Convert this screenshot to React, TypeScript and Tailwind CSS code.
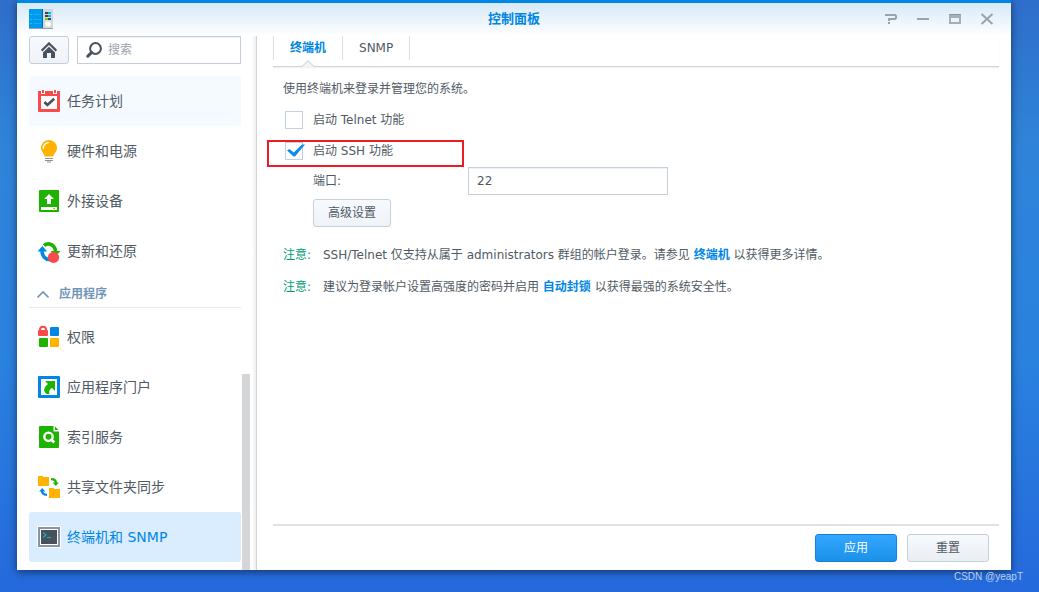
import React, { useState } from 'react';

type IconProps = { className?: string };

const AppIcon: React.FC<IconProps> = ({ className }) => (
  <svg className={className} viewBox="0 0 24 20" aria-hidden="true">
    <rect x="0" y="0" width="13" height="19" fill="#0099ee" />
    <rect x="14" y="0" width="10" height="19" fill="#d3d9df" />
    <rect x="0" y="19" width="24" height="1" fill="#9aa2aa" />
    <rect x="13" y="0" width="1" height="19" fill="#0069b8" />
    <path d="M4 5.500h8M4 10.500h8M4 14.500h8" stroke="#12b0f4" strokeWidth="1" />
    <path d="M1 5.500h2M1 10.500h2M1 14.500h2" stroke="#00d0ff" strokeWidth="1" />
    <path d="M16 4h6M16 7h6M16 10h6" stroke="#3c4650" strokeWidth="2" />
    <path d="M19 4h3M19 7h3" stroke="#00b8e6" strokeWidth="2" />
    <path d="M16 10h3" stroke="#7fd000" strokeWidth="2" />
    <circle cx="19" cy="15" r="2.800" fill="#ffffff" />
  </svg>
);

const HomeIcon: React.FC<IconProps> = ({ className }) => (
  <svg className={className} viewBox="0 0 16 16" aria-hidden="true">
    <path d="M0.600 8.600L8 1.400l7.400 7.200" fill="none" stroke="#48525d" strokeWidth="2.200" />
    <path d="M2 10.500L8 4.800l6 5.700V16h-4v-5H6v5H2z" fill="#48525d" />
  </svg>
);

const SearchIcon: React.FC<IconProps> = ({ className }) => (
  <svg className={className} viewBox="0 0 16 16" aria-hidden="true">
    <circle cx="9.500" cy="6.500" r="5.400" fill="none" stroke="#48525d" strokeWidth="2" />
    <path d="M5.400 10.600L1.800 14.200" stroke="#48525d" strokeWidth="3" strokeLinecap="round" />
  </svg>
);

const TaskIcon: React.FC<IconProps> = ({ className }) => (
  <svg className={className} viewBox="0 0 24 24" aria-hidden="true">
    <path d="M1 2h22v20q0 1-1 1H2q-1 0-1-1z" fill="#fa4b4b" />
    <rect x="4" y="7" width="16" height="13" fill="#ffffff" />
    <path d="M4 1h4v4H4zM16 1h4v4h-4z" fill="#ffffff" />
    <path d="M5 1h2v3H5zM17 1h2v3h-2z" fill="#fa4b4b" />
    <path d="M7.400 13l3 3 6.800-6.200" fill="none" stroke="#48525d" strokeWidth="2.600" />
  </svg>
);

const BulbIcon: React.FC<IconProps> = ({ className }) => (
  <svg className={className} viewBox="0 0 24 24" aria-hidden="true">
    <path d="M12 1a8 8 0 0 1 8 8c0 3.800-3 4.800-3.600 8.400H7.600C7 13.800 4 12.800 4 9a8 8 0 0 1 8-8z" fill="#ffb300" />
    <path d="M6.300 9.200A5.500 5.500 0 0 1 11.500 3.600" fill="none" stroke="#ffffff" strokeWidth="1.400" strokeLinecap="round" />
    <path d="M8 19.500h8M8 21.500h8M10 23h4" stroke="#8893a5" strokeWidth="1" />
  </svg>
);

const ExternalIcon: React.FC<IconProps> = ({ className }) => (
  <svg className={className} viewBox="0 0 24 24" aria-hidden="true">
    <rect x="2" y="1" width="20" height="22" rx="1" fill="#1eb300" />
    <path d="M12 5l5 5h-3v5h-4v-5H7z" fill="#ffffff" />
    <rect x="4" y="18" width="16" height="3" fill="#ffffff" />
    <rect x="16" y="19" width="2" height="1" fill="#ff9500" />
  </svg>
);

const UpdateIcon: React.FC<IconProps> = ({ className }) => (
  <svg className={className} viewBox="0 0 24 24" aria-hidden="true">
    <path d="M7 6.600C10 4 17 3.600 18.600 12" fill="none" stroke="#1eb300" strokeWidth="3.600" />
    <path d="M13.600 12H23.600L18.800 17z" fill="#1eb300" />
    <path d="M5.200 11C4.400 17 9 21 13 20.400" fill="none" stroke="#0086e5" strokeWidth="3.600" />
    <path d="M0.600 12.400L5.400 7l4.800 5.400z" fill="#0086e5" />
    <circle cx="16.500" cy="18.400" r="5.600" fill="#fa4b4b" />
  </svg>
);

const PermissionIcon: React.FC<IconProps> = ({ className }) => (
  <svg className={className} viewBox="0 0 24 24" aria-hidden="true">
    <path d="M3 6V4.800a3 3 0 0 1 6 0V6" fill="none" stroke="#fa4b4b" strokeWidth="2" />
    <rect x="1" y="5" width="10" height="6" rx="1" fill="#fa4b4b" />
    <rect x="13" y="2" width="9" height="9" rx="1" fill="#0086e5" />
    <rect x="2" y="13" width="9" height="9" rx="1" fill="#1eb300" />
    <rect x="13" y="13" width="9" height="9" rx="1" fill="#ffb300" />
  </svg>
);

const PortalIcon: React.FC<IconProps> = ({ className }) => (
  <svg className={className} viewBox="0 0 24 24" aria-hidden="true">
    <rect x="1" y="1" width="22" height="22" rx="1" fill="#0086e5" />
    <rect x="4" y="4" width="16" height="16" fill="#ffffff" />
    <path d="M8 6h10v10l-3-3c-2.600 1.200-3.200 3-2.600 6H9.500C5.800 16 6.800 12 11 9z" fill="#1eb300" />
  </svg>
);

const IndexIcon: React.FC<IconProps> = ({ className }) => (
  <svg className={className} viewBox="0 0 24 24" aria-hidden="true">
    <path d="M3 1h13.500v5.500H22V22q0 1-1 1H3q-1 0-1-1V2q0-1 1-1z" fill="#1eb300" />
    <path d="M18 1.500l3.500 3.500H18z" fill="#1eb300" />
    <circle cx="11.500" cy="11.800" r="4.200" fill="none" stroke="#ffffff" strokeWidth="2.400" />
    <path d="M14.400 14.600l2.800 2.900" stroke="#ffffff" strokeWidth="2.800" />
  </svg>
);

const ShareIcon: React.FC<IconProps> = ({ className }) => (
  <svg className={className} viewBox="0 0 24 24" aria-hidden="true">
    <path d="M1 1h5v1h6v9H1zM12 13h5v1h6v9H12z" fill="#ffb300" />
    <path d="M14 4.200c3 0 5 0.800 5 4" fill="none" stroke="#1eb300" strokeWidth="2.200" />
    <path d="M15.600 7.500h6.200l-3 3.500z" fill="#1eb300" />
    <path d="M10 19.800c-3 0-5-0.800-5-4" fill="none" stroke="#0086e5" strokeWidth="2.200" />
    <path d="M2.200 16.500h6l-3-3.500z" fill="#0086e5" />
  </svg>
);

const TerminalIcon: React.FC<IconProps> = ({ className }) => (
  <svg className={className} viewBox="0 0 24 24" aria-hidden="true">
    <rect x="0" y="1" width="24" height="22" rx="1" fill="#ffffff" />
    <rect x="1" y="2" width="22" height="20" fill="#8893a5" />
    <rect x="3" y="4" width="18" height="16" fill="#ffffff" />
    <rect x="4" y="5" width="16" height="14" fill="#48525d" />
    <path d="M6 7.500l3 2.500-3 2.500M10 12.500h4" fill="none" stroke="#14b8ae" strokeWidth="1.200" />
  </svg>
);

interface NavEntry {
  id: string;
  label: string;
  icon: React.FC<IconProps>;
}

const systemItems: NavEntry[] = [
  { id: 'task', label: '任务计划', icon: TaskIcon },
  { id: 'hardware', label: '硬件和电源', icon: BulbIcon },
  { id: 'external', label: '外接设备', icon: ExternalIcon },
  { id: 'update', label: '更新和还原', icon: UpdateIcon },
];

const applicationItems: NavEntry[] = [
  { id: 'permission', label: '权限', icon: PermissionIcon },
  { id: 'portal', label: '应用程序门户', icon: PortalIcon },
  { id: 'index', label: '索引服务', icon: IndexIcon },
  { id: 'share', label: '共享文件夹同步', icon: ShareIcon },
  { id: 'terminal', label: '终端机和 SNMP', icon: TerminalIcon },
];

interface NavItemProps {
  item: NavEntry;
  selected: boolean;
  highlighted: boolean;
  onSelect: (id: string) => void;
}

const NavItem: React.FC<NavItemProps> = ({ item, selected, highlighted, onSelect }) => {
  const Icon = item.icon;
  const tone = selected
    ? 'bg-[#d9edff] text-[#0086e5]'
    : highlighted
      ? 'bg-[#f4faff] text-[#505a64]'
      : 'text-[#505a64]';

  return (
    <li>
      <button
        onClick={() => onSelect(item.id)}
        className={`flex h-[50px] w-full items-center gap-1.5 rounded-[3px] pl-2 text-left text-sm ${tone}`}
      >
        <Icon className="h-6 w-6 shrink-0" />
        {item.label}
      </button>
    </li>
  );
};

const TitleBar: React.FC = () => (
  <header className="grid h-[33px] shrink-0 grid-cols-3 items-center bg-linear-to-b from-[#d7e9f7] to-white px-4 pb-px">
    <AppIcon className="-ml-1 h-5 w-6" />
    <h1 className="text-center text-[13px] font-bold text-[#0086e5]">控制面板</h1>
    <div className="flex justify-end gap-4">
      <button aria-label="帮助">
        <svg className="h-4 w-4" viewBox="0 0 16 16" fill="none" stroke="#98a3ad" strokeWidth="2">
          <path d="M2 4h10l1 1v2l-1 1H6v2M6 11v2" />
        </svg>
      </button>
      <button aria-label="最小化">
        <svg className="h-4 w-4" viewBox="0 0 16 16" fill="none" stroke="#98a3ad" strokeWidth="2">
          <path d="M2 8h12" />
        </svg>
      </button>
      <button aria-label="最大化">
        <svg className="h-4 w-4" viewBox="0 0 16 16" fill="none" stroke="#a5afb9" strokeWidth="2">
          <path d="M3 4h10v8H3zM3 6h10" />
          <path d="M2 3.500h12" stroke="#8b96a0" strokeWidth="1" />
        </svg>
      </button>
      <button aria-label="关闭">
        <svg className="h-4 w-4" viewBox="0 0 16 16" fill="none" stroke="#98a3ad" strokeWidth="2">
          <path d="M2.500 3l11 10M13.500 3l-11 10" />
        </svg>
      </button>
    </div>
  </header>
);

const Sidebar: React.FC = () => {
  const [selected, setSelected] = useState('terminal');
  const [open, setOpen] = useState(true);

  return (
    <aside className="flex w-[240px] shrink-0 flex-col border-r border-[#d4d4d4] bg-linear-to-l from-[#eeeeee] to-white to-[4px] pl-3">
      <div className="mr-[15px] flex gap-2">
        <button
          aria-label="主页"
          className="flex h-7 w-10 items-center justify-center rounded-[3px] border border-[#c4ceda] bg-linear-to-b from-[#f7fafd] to-[#eef3f8]"
        >
          <HomeIcon className="h-4 w-4" />
        </button>
        <label className="flex h-7 min-w-0 flex-1 items-center gap-1.5 border border-[#c4ceda] bg-white pl-2 shadow-[inset_0_1px_0_#eef2f6]">
          <SearchIcon className="h-4 w-4 shrink-0" />
          <input
            type="text"
            aria-label="搜索"
            placeholder="搜索"
            className="w-full min-w-0 text-xs text-[#505a64] outline-none placeholder:text-[#9aa3ad]"
          />
        </label>
      </div>

      <div className="mt-3 flex min-h-0 flex-1 gap-px overflow-hidden">
        <nav className="w-[212px]">
          <ul>
            {systemItems.map(item => (
              <NavItem key={item.id} item={item} selected={selected === item.id} highlighted={item.id === 'task'} onSelect={setSelected} />
            ))}
          </ul>
          <button
            onClick={() => setOpen(!open)}
            className="mb-1 flex h-8 w-full items-center gap-2.5 border-b border-[#e6eaee] pt-1 pl-2 text-xs font-bold text-[#7095b8]"
          >
            <svg className="h-3 w-3" viewBox="0 0 12 12" fill="none" stroke="#7095b8" strokeWidth="1.600" aria-hidden="true">
              <path d="M0.500 9.500L6 4 11.500 9.500" />
            </svg>
            应用程序
          </button>
          {open && (
            <ul>
              {applicationItems.map(item => (
                <NavItem key={item.id} item={item} selected={selected === item.id} highlighted={false} onSelect={setSelected} />
              ))}
            </ul>
          )}
        </nav>
        <div className="mt-auto h-[196px] w-2 bg-[#d4d6d8]" />
      </div>
    </aside>
  );
};

interface CheckRowProps {
  id: string;
  label: string;
  checked: boolean;
  onChange: (checked: boolean) => void;
}

const CheckRow: React.FC<CheckRowProps> = ({ id, label, checked, onChange }) => (
  <div className="flex h-[31px] items-center gap-2.5 pl-0.5">
    <span className="relative h-[18px] w-[18px]">
      <input
        id={id}
        type="checkbox"
        checked={checked}
        onChange={e => onChange(e.target.checked)}
        className="block h-[18px] w-[18px] appearance-none border border-[#c4d0dc] bg-white"
      />
      {checked && (
        <svg className="pointer-events-none absolute top-0 left-0.5 h-[18px] w-[18px]" viewBox="0 0 18 18" aria-hidden="true">
          <path d="M0 8.500L2.500 7l4.300 3.500L15 2.500h3L8 14.500H6.500z" fill="#0f8cec" />
        </svg>
      )}
    </span>
    <label htmlFor={id}>{label}</label>
  </div>
);

const TerminalSettings: React.FC = () => {
  const [telnet, setTelnet] = useState(false);
  const [ssh, setSsh] = useState(true);
  const [port, setPort] = useState('22');

  return (
    <div className="min-h-0 flex-1 px-2.5 pt-[7px]">
      <p className="h-[30px] leading-[30px]">使用终端机来登录并管理您的系统。</p>
      <CheckRow id="telnet" label="启动 Telnet 功能" checked={telnet} onChange={setTelnet} />
      <div className="relative">
        <CheckRow id="ssh" label="启动 SSH 功能" checked={ssh} onChange={setSsh} />
        <div className="pointer-events-none absolute top-[5px] -left-4 h-[27px] w-[197px] border-2 border-[#ec1c24]" />
      </div>
      <div className="mt-px flex items-center pl-[30px]">
        <label htmlFor="port" className="w-[155px]">端口:</label>
        <input
          id="port"
          type="text"
          value={port}
          onChange={e => setPort(e.target.value)}
          className="h-7 w-[200px] border border-[#c4d0dc] bg-white px-2 shadow-[inset_0_1px_0_#eef2f6] outline-none"
        />
      </div>
      <button className="mt-1 ml-[30px] h-7 rounded-[3px] border border-[#c4d0dc] bg-linear-to-b from-[#f7fafd] to-[#eef3f8] px-3.5">
        高级设置
      </button>
      <dl className="mt-3 grid grid-cols-[40px_1fr] leading-8">
        <dt className="text-[#009d6c]">注意:</dt>
        <dd>
          SSH/Telnet 仅支持从属于 administrators 群组的帐户登录。请参见 <a href="#terminal" className="font-bold text-[#0086e5]">终端机</a> 以获得更多详情。
        </dd>
        <dt className="text-[#009d6c]">注意:</dt>
        <dd>
          建议为登录帐户设置高强度的密码并启用 <a href="#autoblock" className="font-bold text-[#0086e5]">自动封锁</a> 以获得最强的系统安全性。
        </dd>
      </dl>
    </div>
  );
};

const App: React.FC = () => (
  <div className="flex h-screen flex-col bg-[linear-gradient(180deg,#2f6ecb_0%,#2f84d9_25%,#2a82df_60%,#2569dc_100%)] pl-[17px] font-['DejaVu_Sans','Noto_Sans_CJK_SC',sans-serif] text-xs text-[#505a64]">
    <div className="mr-7 flex min-h-0 flex-1 flex-col border-t-[3px] border-[#0086e5] bg-white shadow-[0_2px_8px_rgba(0,0,0,0.5)]">
      <TitleBar />
      <div className="flex min-h-0 flex-1">
        <Sidebar />
        <main className="flex min-w-0 flex-1 flex-col pr-3 pl-4">
          <div className="relative flex h-[31px] shrink-0 items-start border-b border-[#d3d5d7] shadow-[0_1px_1px_#f0f0f0]">
            <button className="h-6 border-x border-[#d8dfe8] px-4 font-bold text-[#0086e5]">终端机</button>
            <button className="h-6 border-r border-[#d8dfe8] px-4">SNMP</button>
            <svg className="absolute top-6 left-7 h-[7px] w-[14px]" viewBox="0 0 14 7" aria-hidden="true">
              <path d="M0 7L7 0l7 7z" fill="#d3d5d7" />
              <path d="M1.500 7L7 1.500 12.500 7z" fill="#f3f4f5" />
            </svg>
          </div>
          <TerminalSettings />
          <footer className="flex shrink-0 justify-end gap-2.5 border-t-2 border-[#e0e2e4] px-2.5 py-2">
            <button className="h-7 w-[82px] rounded-[3px] border border-[#1482d8] bg-linear-to-b from-[#33a7ff] to-[#1a91ea] text-white">应用</button>
            <button className="h-7 w-[82px] rounded-[3px] border border-[#c4d0dc] bg-linear-to-b from-[#f7fafd] to-[#e9eef3]">重置</button>
          </footer>
        </main>
      </div>
    </div>
    <p className="h-[22px] shrink-0 pr-4 text-right font-['Liberation_Sans',sans-serif] text-[10px] leading-[14px] text-[#b9d2f2]">CSDN @yeapT</p>
  </div>
);

export default App;
